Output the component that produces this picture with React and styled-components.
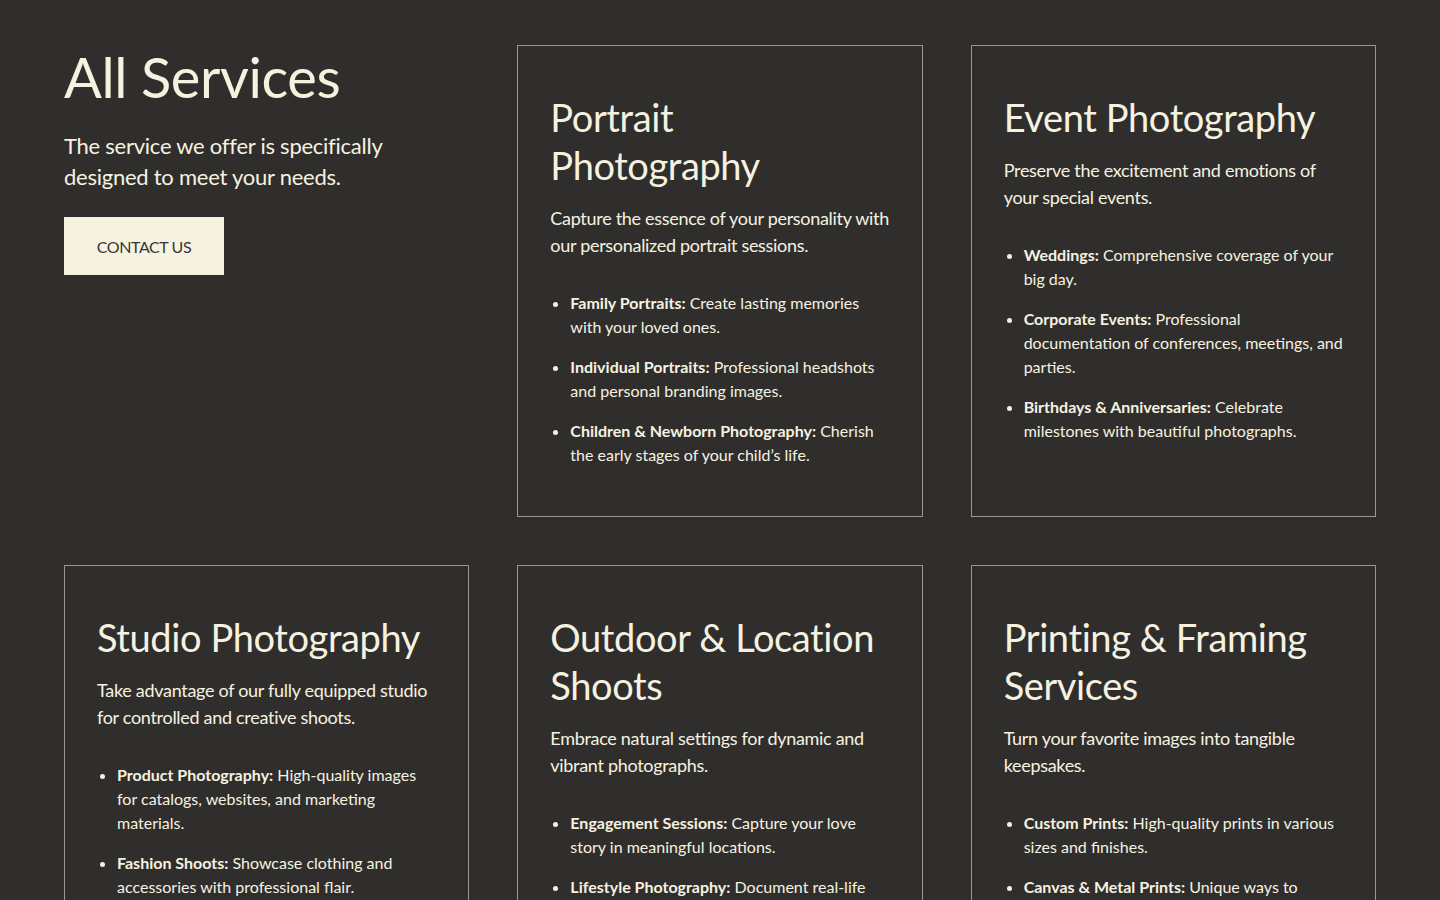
import React from 'react'
import styled, { createGlobalStyle } from 'styled-components'

const services = [
  {
    title: 'Portrait Photography',
    text: 'Capture the essence of your personality with our personalized portrait sessions.',
    items: [
      ['Family Portraits:', 'Create lasting memories with your loved ones.'],
      ['Individual Portraits:', 'Professional headshots and personal branding images.'],
      ['Children & Newborn Photography:', 'Cherish the early stages of your child’s life.'],
    ],
  },
  {
    title: 'Event Photography',
    text: 'Preserve the excitement and emotions of your special events.',
    items: [
      ['Weddings:', 'Comprehensive coverage of your big day.'],
      ['Corporate Events:', 'Professional documentation of conferences, meetings, and parties.'],
      ['Birthdays & Anniversaries:', 'Celebrate milestones with beautiful photographs.'],
    ],
  },
  {
    title: 'Studio Photography',
    text: 'Take advantage of our fully equipped studio for controlled and creative shoots.',
    items: [
      ['Product Photography:', 'High-quality images for catalogs, websites, and marketing materials.'],
      ['Fashion Shoots:', 'Showcase clothing and accessories with professional flair.'],
      ['Creative Concepts:', 'Bring your artistic vision to life with our expert team.'],
    ],
  },
  {
    title: 'Outdoor & Location Shoots',
    text: 'Embrace natural settings for dynamic and vibrant photographs.',
    items: [
      ['Engagement Sessions:', 'Capture your love story in meaningful locations.'],
      ['Lifestyle Photography:', 'Document real-life moments in your everyday surroundings.'],
      ['Travel Photography:', 'Stunning images from your favorite destinations.'],
    ],
  },
  {
    title: 'Printing & Framing Services',
    text: 'Turn your favorite images into tangible keepsakes.',
    items: [
      ['Custom Prints:', 'High-quality prints in various sizes and finishes.'],
      ['Canvas & Metal Prints:', 'Unique ways to display your favorite photographs.'],
      ['Framing Options:', 'Elegant frames to complement your images.'],
    ],
  },
]

export default function App() {
  return (
    <>
      <GlobalStyle />
      <Page>
        <Intro>
          <PageTitle>All Services</PageTitle>
          <Lead>The service we offer is specifically designed to meet your needs.</Lead>
          <Button type="button">Contact Us</Button>
        </Intro>
        {services.map((s) => (
          <Card key={s.title}>
            <CardTitle>{s.title}</CardTitle>
            <CardText>{s.text}</CardText>
            <List>
              {s.items.map(([label, desc]) => (
                <Item key={label}>
                  <strong>{label}</strong> {desc}
                </Item>
              ))}
            </List>
          </Card>
        ))}
      </Page>
    </>
  )
}

const GlobalStyle = createGlobalStyle`
  body {
    margin: 0;
    background: #302e2c;
    color: #f6f2e0;
    font-family: Lato, "Liberation Sans", sans-serif;
  }
`

const Page = styled.main`
  display: grid;
  grid-template-columns: repeat(3, 1fr);
  gap: 48px;
  padding: 45px 64px 64px;
`

const Intro = styled.section`
  display: flex;
  flex-direction: column;
  align-items: flex-start;
`

const PageTitle = styled.h1`
  margin: 0;
  font-size: 56px;
  font-weight: 400;
  line-height: 64px;
  letter-spacing: -0.4px;
`

const Lead = styled.p`
  margin: 21px 0 25px;
  font-size: 22px;
  line-height: 31px;
  letter-spacing: -0.25px;
  max-width: 330px;
`

const Button = styled.button`
  width: 160px;
  height: 58px;
  border: 0;
  background: #f6f2e0;
  color: #383633;
  font-family: inherit;
  font-size: 16px;
  letter-spacing: -0.4px;
  text-transform: uppercase;
  cursor: pointer;
`

const Card = styled.article`
  border: 1px solid #9b9891;
  padding: 47px 32px 49px;
`

const CardTitle = styled.h2`
  margin: 0;
  font-size: 38px;
  font-weight: 400;
  line-height: 48px;
  letter-spacing: -0.4px;
`

const CardText = styled.p`
  margin: 16px 0 32px;
  font-size: 18px;
  line-height: 27px;
  letter-spacing: -0.3px;
`

const List = styled.ul`
  margin: 0;
  padding: 0 0 0 20px;
  display: flex;
  flex-direction: column;
  gap: 16px;
`

const Item = styled.li`
  font-size: 16px;
  line-height: 24px;
  strong {
    font-weight: 700;
  }
`
